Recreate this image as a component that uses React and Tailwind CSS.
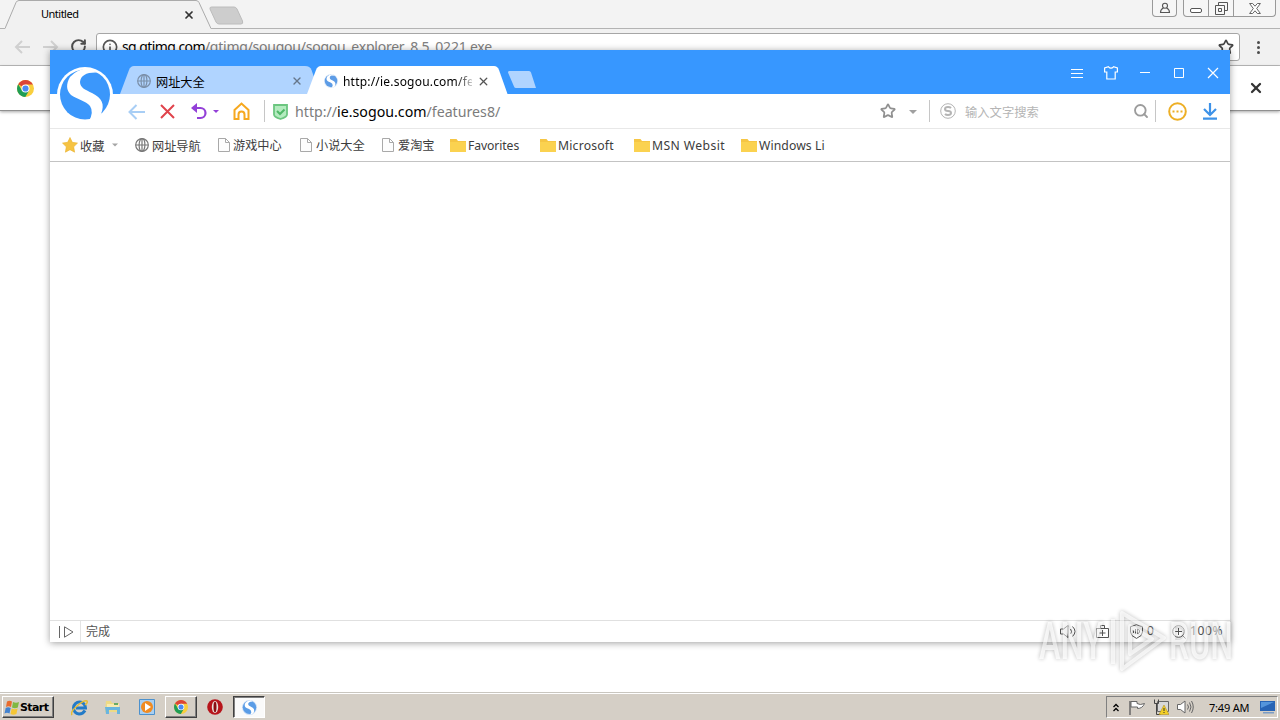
import { X, Star, Search, RotateCw, Info } from 'lucide-react';

const SogouMark = ({ className, ring = '#fff', disc = '#3b97fb' }) => (
    <svg className={className} viewBox="0 0 56 56">
        <circle cx="28" cy="28" r="28" fill={ring} />
        <circle cx="28" cy="27.500" r="25" fill={disc} />
        <path d="M40 5.500Q24 5 23 15C23 21 29 23 35 26 45 31 48 37 44 47Q41 53 32 54 37 45 33 39C29 34 20 32 14 28 9 23 9 17 13 10Q20 2 32 1z" fill="#fff" />
    </svg>
);

const ChromeMark = ({ className }) => (
    <svg className={className} viewBox="0 0 16 16">
        <circle cx="8" cy="8" r="8" fill="#f9cf3d" />
        <path d="M8 8L1.1 4A8 8 0 0 1 14.9 4L15 4.2H8z" fill="#dc4437" />
        <path d="M1.1 4A8 8 0 0 0 7.8 16L11.3 10 8 8 4.7 9.8z" fill="#1f9d55" />
        <circle cx="8" cy="8" r="3.8" fill="#fff" />
        <circle cx="8" cy="8" r="2.9" fill="#4a8af4" />
    </svg>
);

const Globe = ({ className }) => (
    <svg className={className} viewBox="0 0 14 14" fill="none" stroke="currentColor" strokeWidth="1.2">
        <circle cx="7" cy="7" r="6.3" />
        <ellipse cx="7" cy="7" rx="2.9" ry="6.3" />
        <path d="M.7 7h12.6M7 .7v12.6" />
    </svg>
);

const Page = () => (
    <svg className="h-[14px] w-[12px] shrink-0" viewBox="0 0 12 14" fill="#fdfdfd" stroke="#a9a9a9">
        <path d="M.5.5h7l4 4v9H.5zM7.5.5v4h4" />
    </svg>
);

const Folder = () => (
    <svg className="h-[13px] w-[16px] shrink-0" viewBox="0 0 16 13">
        <path d="M0 0h6.5l1.5 2h8v11H0z" fill="#f6c644" />
        <path d="M0 3h16v10H0z" fill="#fbd250" />
    </svg>
);

const Caret = ({ className }) => (
    <svg className={className} viewBox="0 0 8 4">
        <path d="M0 0h8L4 4z" fill="currentColor" />
    </svg>
);

const bookmarks = [
    { icon: <Page />, label: '游戏中心', className: 'w-[82px] gap-[3px]' },
    { icon: <Page />, label: '小说大全', className: 'w-[82px] gap-[4px]' },
    { icon: <Page />, label: '爱淘宝', className: 'w-[68px] gap-[4px]' },
    { icon: <Folder />, label: 'Favorites', className: 'w-[90px] gap-[2px] tracking-[-0.1px]' },
    { icon: <Folder />, label: 'Microsoft', className: 'w-[94px] gap-[2px] tracking-[0.2px]' },
    { icon: <Folder />, label: 'MSN Websit', className: 'w-[107px] gap-[2px] tracking-[0.4px]' },
    { icon: <Folder />, label: 'Windows Li', className: 'w-[90px] gap-[2px] tracking-[0.1px]' },
];

const ChromeWindow = () => (
    <div className="flex-1">
        <div className="flex h-[29px] items-start border-b border-[#b3b3b3] bg-[#f3f3f3]">
            <div className="relative ml-[5px] h-[29px] w-[206px] shrink-0">
                <svg className="absolute inset-0 h-[29px] w-[206px]" viewBox="0 0 206 29">
                    <path d="M0 28.5L11 2.5Q12 .5 14 .5H191Q193 .5 194 2.5L206 28.5V29H0z" fill="#f1f1f1" />
                    <path d="M0 28.5L11 2.5Q12 .5 14 .5H191Q193 .5 194 2.5L206 28.5" fill="none" stroke="#aaa" />
                </svg>
                <div className="relative flex h-[29px] items-center pl-[36px] text-[11px] text-black">
                    <span className="w-[142px] -translate-y-px font-['Noto_Sans'] tracking-[-0.5px]">Untitled</span>
                    <X className="size-[12px] text-[#333]" strokeWidth={3.5} />
                </div>
            </div>
            <svg className="mt-[6px] -ml-[3px] h-[19px] w-[36px]" viewBox="0 0 36 19">
                <path d="M3.500 1H26Q28 1 29 3L34.500 15Q35.500 18 33 18H11Q9 18 8 16L2 3Q1.500 1 3.500 1z" fill="#cdcdcd" stroke="#bcbcbc" />
            </svg>
            <div className="ml-auto flex h-[17px] text-[#555]">
                <div className="mr-[6px] flex w-[25px] items-center justify-center rounded-b-[4px] border border-t-0 border-[#999] bg-[#f6f6f6]">
                    <svg className="h-[12px] w-[12px]" viewBox="0 0 12 12" fill="none" stroke="currentColor" strokeWidth="1.1">
                        <circle cx="6" cy="3.700" r="2.500" />
                        <path d="M4.500 6C2 7 1.500 8 1.500 10.500h9C10.500 8 10 7 7.500 6" />
                    </svg>
                </div>
                <div className="mr-[4px] flex w-[93px] overflow-hidden rounded-b-[4px] border border-t-0 border-[#999] bg-[#f6f6f6]">
                    <div className="flex w-[25px] items-center justify-center border-r border-[#999]">
                        <div className="mt-[4px] h-[5px] w-[12px] rounded-[2px] border border-[#555] bg-white" />
                    </div>
                    <div className="flex w-[25px] items-center justify-center border-r border-[#999]">
                        <svg className="size-[13px]" viewBox="0 0 13 13" fill="none" stroke="currentColor">
                            <path d="M3.500 3V.5h9v8H10M.5 3.500h9v9h-9zM3.500 6.500h3v3h-3z" />
                        </svg>
                    </div>
                    <div className="flex flex-1 items-center justify-center">
                        <svg className="h-[11px] w-[12px]" viewBox="0 0 12 11" fill="#fff" stroke="currentColor" strokeWidth=".9">
                            <path d="M.6.5h3L6 3.200 8.400.5h3L7.700 5.500l3.700 5h-3L6 7.800 3.600 10.500h-3L4.300 5.500z" />
                        </svg>
                    </div>
                </div>
            </div>
        </div>

        <div className="flex h-[37px] items-start border-b border-[#bcbcbc] bg-[#f1f1f1]">
            <svg className="mt-[11px] ml-[14px] h-[14px] w-[16px]" viewBox="0 0 16 14" fill="none" stroke="#d0d0d0" strokeWidth="2">
                <path d="M16 7H2M8 1L2 7l6 6" />
            </svg>
            <svg className="mt-[11px] ml-[13px] h-[14px] w-[16px]" viewBox="0 0 16 14" fill="none" stroke="#d0d0d0" strokeWidth="2">
                <path d="M0 7h14M8 1l6 6-6 6" />
            </svg>
            <RotateCw className="mt-[9px] ml-[11px] size-[17px] text-[#4d4d4d]" strokeWidth={2.8} />
            <div className="mt-[4px] ml-[9px] flex h-[28px] w-[1144px] items-center rounded-[3px] border border-[#a6a6a6] bg-white">
                <Info className="ml-[5px] size-[16px] text-[#555]" strokeWidth={2.5} />
                <span className="ml-[4px] w-[380px] font-['Noto_Sans'] text-[14px] tracking-[-0.24px] whitespace-nowrap text-[#808080]">
                    <span className="tracking-[-0.6px] text-black">sg.qtimg.com</span>/qtimg/sougou/sogou_explorer_8.5_0221.exe
                </span>
                <Star className="mr-[5px] ml-auto size-[16px] text-[#444]" strokeWidth={2.5} />
            </div>
            <div className="mt-[12px] ml-[17px] flex flex-col gap-[2px]">
                <div className="size-[3px] rounded-full bg-[#4c4c4c]" />
                <div className="size-[3px] rounded-full bg-[#4c4c4c]" />
                <div className="size-[3px] rounded-full bg-[#4c4c4c]" />
            </div>
        </div>

        <div className="flex h-[45px] items-center border-b border-[#909090] bg-white shadow-[0_1px_3px_rgba(0,0,0,0.35)]">
            <ChromeMark className="ml-[17px] size-[17px]" />
            <X className="mr-[16px] ml-auto size-[16px] text-[#333]" strokeWidth={3.4} />
        </div>
    </div>
);

const TitleBar = () => (
    <div className="flex h-[44px] items-end bg-[#3797ff]">
        <div className="relative z-10 h-[44px] w-[70px] shrink-0">
            <SogouMark className="absolute top-[17px] left-[7px] size-[56px]" />
        </div>
        <div className="relative h-[28px] w-[187px] shrink-0">
            <svg className="absolute inset-0 h-[28px] w-[200px]" viewBox="0 0 200 28">
                <path d="M0 28L9 4Q10.500 0 14 0H185Q190 0 191.500 4L200 28z" fill="#b0d4ff" />
            </svg>
            <div className="relative flex h-[30px] items-center pl-[17px]">
                <Globe className="size-[14px] text-[#7b8fa8]" />
                <span className="ml-[5px] w-[135px] translate-y-px text-[12.2px] text-black">网址大全</span>
                <X className="size-[12px] text-[#66778b]" strokeWidth={2.8} />
            </div>
        </div>
        <div className="relative h-[28px] w-[201px] shrink-0">
            <svg className="absolute inset-0 h-[28px] w-[201px]" viewBox="0 0 201 28">
                <path d="M0 28L9 4Q10.500 0 14 0H187Q190.500 0 192 4L200.500 28z" fill="#fff" />
            </svg>
            <div className="relative flex h-[30px] items-center pl-[17px]">
                <SogouMark className="size-[14px]" ring="#dce9f8" disc="#5d9ce6" />
                <span className="ml-[5px] w-[129px] translate-y-px bg-linear-to-r from-black from-85% to-[#ccc] bg-clip-text py-[2px] font-['Noto_Sans'] text-[12px] tracking-[0.2px] whitespace-nowrap text-transparent">
                    http://ie.sogou.com/fe
                </span>
                <X className="ml-[5px] size-[13px] text-[#555]" strokeWidth={2.4} />
            </div>
        </div>
        <svg className="mb-[6px] h-[17px] w-[28px]" viewBox="0 0 28 17">
            <path d="M1 0H21Q22.500 0 23 1.500L28 17H8Q6.500 17 6 15.500L0 1.500Q0 0 1 0z" fill="#b0d4ff" />
        </svg>
        <div className="mr-[10px] mb-[14px] ml-auto flex items-center gap-[20px] text-white">
            <svg className="size-[14px]" viewBox="0 0 14 14" stroke="currentColor">
                <path d="M1 3.500h12M1 7.500h12M1 11.500h12" />
            </svg>
            <svg className="size-[14px]" viewBox="0 0 14 14" fill="none" stroke="currentColor" strokeWidth="1.2">
                <path d="M4.500.8Q7 3.500 9.500.8L13.400 2v4h-2.200v7H2.800V6H.6V2z" />
            </svg>
            <svg className="size-[14px]" viewBox="0 0 14 14" stroke="currentColor">
                <path d="M2 6.500h10" />
            </svg>
            <svg className="size-[14px]" viewBox="0 0 14 14" fill="none" stroke="currentColor">
                <path d="M2.500 2.500h9v9h-9z" />
            </svg>
            <svg className="size-[14px]" viewBox="0 0 14 14" stroke="currentColor" strokeWidth="1.2">
                <path d="M2 2l10 10M12 2L2 12" />
            </svg>
        </div>
    </div>
);

const NavBar = () => (
    <div className="flex h-[35px] items-center border-b border-[#e8e8e8] bg-white">
        <svg className="ml-[78px] h-[16px] w-[17px] translate-y-px" viewBox="0 0 17 16" fill="none" stroke="#a8cef5" strokeWidth="2">
            <path d="M17 8H1.500M8.500 1l-7 7 7 7" />
        </svg>
        <svg className="ml-[15px] size-[15px]" viewBox="0 0 15 15" stroke="#e0434c" strokeWidth="2">
            <path d="M1 1l13 13M14 1L1 14" />
        </svg>
        <svg className="ml-[16px] h-[17px] w-[16px]" viewBox="0 0 16 17" fill="none" stroke="#9340d8" strokeWidth="2.200">
            <path d="M2 5h7.500a5 5 0 0 1 0 10H6" />
            <path d="M6 0v10L0 5z" fill="#9340d8" stroke="none" />
        </svg>
        <Caret className="ml-[6px] h-[3px] w-[6px] text-[#9340d8]" />
        <svg className="ml-[14px] h-[18px] w-[17px]" viewBox="0 0 17 18" fill="none" stroke="#f6a81f" strokeWidth="2">
            <path d="M1.500 8L8.500 1.500l7 6.500v9h-4v-4.500a3 3 0 0 0-6 0V17h-4z" />
        </svg>
        <div className="ml-[14px] h-[22px] w-px bg-[#c6c6c6]" />
        <svg className="ml-[8px] h-[16px] w-[15px] translate-y-px" viewBox="0 0 15 16" fill="none" stroke="#6cc680" strokeWidth="1.800">
            <path d="M1 1h13v9.500Q14 13 7.500 15 1 13 1 10.500z" fill="#b4ebbf" />
            <path d="M4 7l3 3 4.500-4.500" stroke="#4fb868" strokeWidth="2" />
        </svg>
        <span className="ml-[7px] w-[585px] translate-y-px font-['Noto_Sans'] text-[14.2px] whitespace-nowrap text-[#7c7c7c]">
            http://<span className="text-black">ie.sogou.com</span>/features8/
        </span>
        <Star className="size-[16px] text-[#909090]" strokeWidth={2.6} />
        <Caret className="ml-[13px] h-[4px] w-[8px] translate-y-px text-[#a0a0a0]" />
        <div className="ml-[12px] h-[22px] w-px bg-[#c6c6c6]" />
        <svg className="ml-[10px] size-[16px]" viewBox="0 0 16 16" fill="none" stroke="#b4b4b4">
            <circle cx="8" cy="8" r="7.300" />
            <path d="M11 5Q10 4 8 4 5 4 5 6T8 8t3 2-3 2Q6 12 5 11" strokeWidth="2" />
        </svg>
        <span className="ml-[9px] w-[168px] translate-y-px text-[12.3px] text-[#b5b5b5]">输入文字搜索</span>
        <Search className="size-[16px] text-[#9c9c9c]" strokeWidth={2.8} />
        <div className="ml-[6px] h-[22px] w-px bg-[#c6c6c6]" />
        <svg className="ml-[12px] size-[19px]" viewBox="0 0 19 19" fill="none" stroke="#edaf26" strokeWidth="2">
            <circle cx="9.500" cy="9.500" r="8.300" />
            <path d="M4.500 9.500h2M8.500 9.500h2M12.500 9.500h2" strokeWidth="2" />
        </svg>
        <svg className="ml-[15px] h-[17px] w-[16px]" viewBox="0 0 16 17" fill="none" stroke="#3d92e8" strokeWidth="2.200">
            <path d="M8 0v11M2 6l6 6 6-6M1 15.700h14" />
        </svg>
    </div>
);

const BookmarkBar = () => (
    <div className="flex h-[33px] items-center border-b border-[#c3c3c3] bg-white text-[12.2px] text-[#3c3c3c]">
        <svg className="ml-[12px] size-[16px]" viewBox="0 0 16 16">
            <path d="M8 .5l2.300 4.800 5.200.8-3.800 3.700.9 5.400L8 12.700l-4.600 2.500.9-5.400L.5 6.100l5.200-.8z" fill="#f6c343" stroke="#e9b12c" strokeWidth=".6" />
        </svg>
        <span className="ml-[2px] w-[32px] translate-y-px">收藏</span>
        <Caret className="h-[4px] w-[6px] text-[#a5a5a5]" />
        <Globe className="ml-[17px] size-[14px] text-[#777]" />
        <span className="ml-[3px] w-[66px] translate-y-px">网址导航</span>
        {bookmarks.map((b) => (
            <div key={b.label} className={`flex shrink-0 items-center font-['Noto_Sans','Noto_Sans_CJK_SC',sans-serif] whitespace-nowrap ${b.className}`}>
                {b.icon}
                <span className="translate-y-px">{b.label}</span>
            </div>
        ))}
    </div>
);

const StatusBar = () => (
    <div className="flex h-[22px] items-center border-t border-[#e0e0e0] bg-white text-[12px] text-[#555]">
        <svg className="ml-[9px] h-[12px] w-[15px]" viewBox="0 0 15 12" fill="none" stroke="#666">
            <path d="M.5 0v12M5.500.8v10.400L14 6z" />
        </svg>
        <div className="ml-[6px] h-[21px] w-px bg-[#e4e4e4]" />
        <span className="ml-[5px] -translate-y-px">完成</span>
        <svg className="ml-auto h-[13px] w-[17px] shrink-0" viewBox="0 0 17 13" fill="none" stroke="#555">
            <path d="M.5 4v5h3L8 12.500V.5L3.500 4zM10.500 4q2 2.500 0 5M12.500 1.500q5 5 0 10" />
        </svg>
        <svg className="ml-[19px] h-[13px] w-[13px] shrink-0" viewBox="0 0 13 13" fill="none" stroke="#555">
            <path d="M.5 3.500h12v9H.5zM4.500 3.500v-3h4v3M3.500 8h6M6.500 5v6" />
        </svg>
        <svg className="ml-[21px] h-[15px] w-[13px] shrink-0" viewBox="0 0 13 15" fill="none" stroke="#555">
            <path d="M6.500.7l6 2V8q0 4-6 6.400Q.5 12 .5 8V2.700zM3.500 9V6.500M5.500 9.500V5M7.500 9.500V5Q10.500 6 9.500 8.500L7.500 9.500" />
        </svg>
        <span className="ml-[4px] w-[7px] -translate-y-px font-['Noto_Sans']">0</span>
        <svg className="ml-[18px] h-[14px] w-[14px] shrink-0" viewBox="0 0 14 14" fill="none" stroke="#555">
            <circle cx="6.500" cy="6.500" r="5.800" />
            <path d="M6.500 3v7M3 6.500h7M10.500 10.500l3 3" />
        </svg>
        <span className="mr-[7px] ml-[4px] w-[33px] -translate-y-px font-['Noto_Sans'] tracking-[0.6px]">100%</span>
    </div>
);

const SogouWindow = () => (
    <div className="absolute top-[50px] left-[50px] flex h-[592px] w-[1180px] flex-col bg-white shadow-[0_1px_7px_rgba(0,0,0,0.38)]">
        <TitleBar />
        <NavBar />
        <BookmarkBar />
        <div className="flex-1 bg-white" />
        <StatusBar />
    </div>
);

const Watermark = () => (
    <svg className="absolute top-[605px] left-[1032px] h-[72px] w-[208px] opacity-65 drop-shadow-[0_0_2px_rgba(0,0,0,0.55)]" viewBox="0 0 208 72">
        <g fill="#fff" fillOpacity=".75" fontFamily="Roboto" fontSize="51" fontWeight="500">
            <text x="7" y="54" textLength="64" lengthAdjust="spacingAndGlyphs">ANY</text>
            <text x="137" y="54" textLength="64" lengthAdjust="spacingAndGlyphs">RUN</text>
        </g>
        <g fill="none" stroke="#fff" strokeOpacity=".7" strokeLinejoin="round">
            <path d="M90 8l42 25-42 31z" strokeWidth="4" />
            <path d="M81 14v45M98 21l22 13-22 15z" strokeWidth="4" />
        </g>
    </svg>
);

const Taskbar = () => (
    <div className="flex h-[28px] items-center border-t border-[#c9c6bf] bg-[#d5cfc6] pt-[1px] pl-[2px] shadow-[inset_0_1px_0_#fff]">
        <div className="flex h-[22px] w-[52px] items-center border border-t-white border-r-[#404040] border-b-[#404040] border-l-white bg-[#d5cfc6] shadow-[inset_-1px_-1px_0_#808080]">
            <svg className="ml-[1px] h-[15px] w-[16px]" viewBox="0 0 16 15">
                <path d="M3 1.500Q5.500 0 8 1.500L7 7Q4.500 5.500 2 7z" fill="#e96b2d" />
                <path d="M9 2q3 1.500 6 0l-1.200 5.500q-3 1.500-5.800 0z" fill="#80b842" />
                <path d="M1.700 8Q4 6.500 6.700 8l-1.200 5.500Q3 12 .5 13.500z" fill="#4382cf" />
                <path d="M7.700 8.500q3 1.500 5.900 0L12.400 14q-3 1.500-5.900 0z" fill="#f5c635" />
            </svg>
            <span className="font-['DejaVu_Sans'] text-[11px] font-bold tracking-[-0.6px] text-black">Start</span>
        </div>
        <svg className="ml-[17px] size-[17px]" viewBox="0 0 17 17" fill="none">
            <path d="M14 11.500Q12 15 8 15A6 6 0 1 1 14.500 9H5" stroke="#237bc7" strokeWidth="3" />
            <path d="M1 16Q-1 13 6 7T16 2q1 2-2 4" stroke="#e6bc32" strokeWidth="1.500" />
        </svg>
        <svg className="ml-[16px] h-[16px] w-[17px]" viewBox="0 0 17 16">
            <path d="M2 2h5l1 2h7v9H1z" fill="#edda86" />
            <path d="M3 5h12v5H3z" fill="#f8eab0" />
            <path d="M1 8h15v7h-3v-4H5v4H2z" fill="#69b5df" />
            <path d="M10 4h4v2h-4z" fill="#6aaa66" />
        </svg>
        <svg className="ml-[18px] size-[16px]" viewBox="0 0 16 16">
            <path d="M.5.5h15v15H.5z" fill="#a9cff1" stroke="#4c91cd" />
            <circle cx="8" cy="8" r="6" fill="#f18b21" />
            <path d="M6 4l6 4-6 4z" fill="#fff" />
        </svg>
        <div className="ml-[10px] flex h-[22px] w-[32px] items-center justify-center border border-t-white border-r-[#404040] border-b-[#404040] border-l-white shadow-[inset_-1px_-1px_0_#808080]">
            <ChromeMark className="size-[14px]" />
        </div>
        <svg className="ml-[10px] size-[16px]" viewBox="0 0 16 16">
            <circle cx="8" cy="8" r="7.800" fill="#b7141b" />
            <ellipse cx="8" cy="8" rx="3.200" ry="6" fill="#e9e3dc" />
            <ellipse cx="8" cy="8" rx="1.500" ry="5.300" fill="#8b0d12" />
        </svg>
        <div className="ml-[10px] flex h-[22px] w-[32px] items-center justify-center border border-t-[#404040] border-r-white border-b-white border-l-[#404040] bg-[#fafafa] shadow-[inset_1px_1px_0_#808080]">
            <SogouMark className="size-[15px]" ring="#c8ddf7" disc="#5a9ce6" />
        </div>
        <div className="mr-[2px] ml-auto flex h-[22px] w-[172px] items-center border border-t-[#808080] border-r-white border-b-white border-l-[#808080]">
            <svg className="ml-[6px] h-[9px] w-[6px] shrink-0" viewBox="0 0 6 9" fill="none" stroke="#000" strokeWidth="1.300">
                <path d="M.5 4L3 1.500 5.500 4M.5 8L3 5.500 5.500 8" />
            </svg>
            <svg className="ml-[10px] h-[15px] w-[16px] shrink-0" viewBox="0 0 16 15" fill="#fff" stroke="#666">
                <path d="M1 1v14" strokeWidth="1.500" />
                <path d="M2 1.500h6v2q3 2 7.500 0-2 5-7 5V7H2z" />
            </svg>
            <svg className="ml-[8px] size-[16px] shrink-0" viewBox="0 0 16 16">
                <path d="M4.500 2.500h11v10h-11z" fill="#d8d8d8" stroke="#666" />
                <path d="M1.500.5v4h4v-4M3.500 4.500v11h4" fill="none" stroke="#444" />
                <path d="M11 6l5 9.500H6z" fill="#f3cf26" stroke="#aa8712" strokeWidth=".5" />
                <path d="M11 9v3M11 13v1" stroke="#333" />
            </svg>
            <svg className="ml-[8px] h-[14px] w-[17px] shrink-0" viewBox="0 0 17 14" fill="none" stroke="#666">
                <path d="M.5 4.500v5h3L8 13V1L3.500 4.500z" fill="#fff" />
                <path d="M10.500 4.500q2 2.500 0 5M12.500 2.500q3 4.500 0 9M14.500 1q3.500 6 0 12" />
            </svg>
            <span className="ml-[15px] w-[51px] shrink-0 font-['Noto_Sans'] text-[11px] tracking-[-0.2px] whitespace-nowrap text-black">7:49 AM</span>
            <svg className="h-[14px] w-[15px] shrink-0" viewBox="0 0 15 14">
                <path d="M0 1h15v10H0z" fill="#2864b5" />
                <path d="M1 2h13L1 8z" fill="#5595db" />
                <path d="M3 12h11v1.500H3z" fill="#7b9cc5" />
            </svg>
        </div>
    </div>
);

const App = () => {
    return (
        <div className="relative flex h-[720px] w-[1280px] flex-col overflow-hidden bg-white font-['Noto_Sans_CJK_SC',sans-serif] leading-none">
            <ChromeWindow />
            <Taskbar />
            <SogouWindow />
            <Watermark />
        </div>
    );
};

export default App;
